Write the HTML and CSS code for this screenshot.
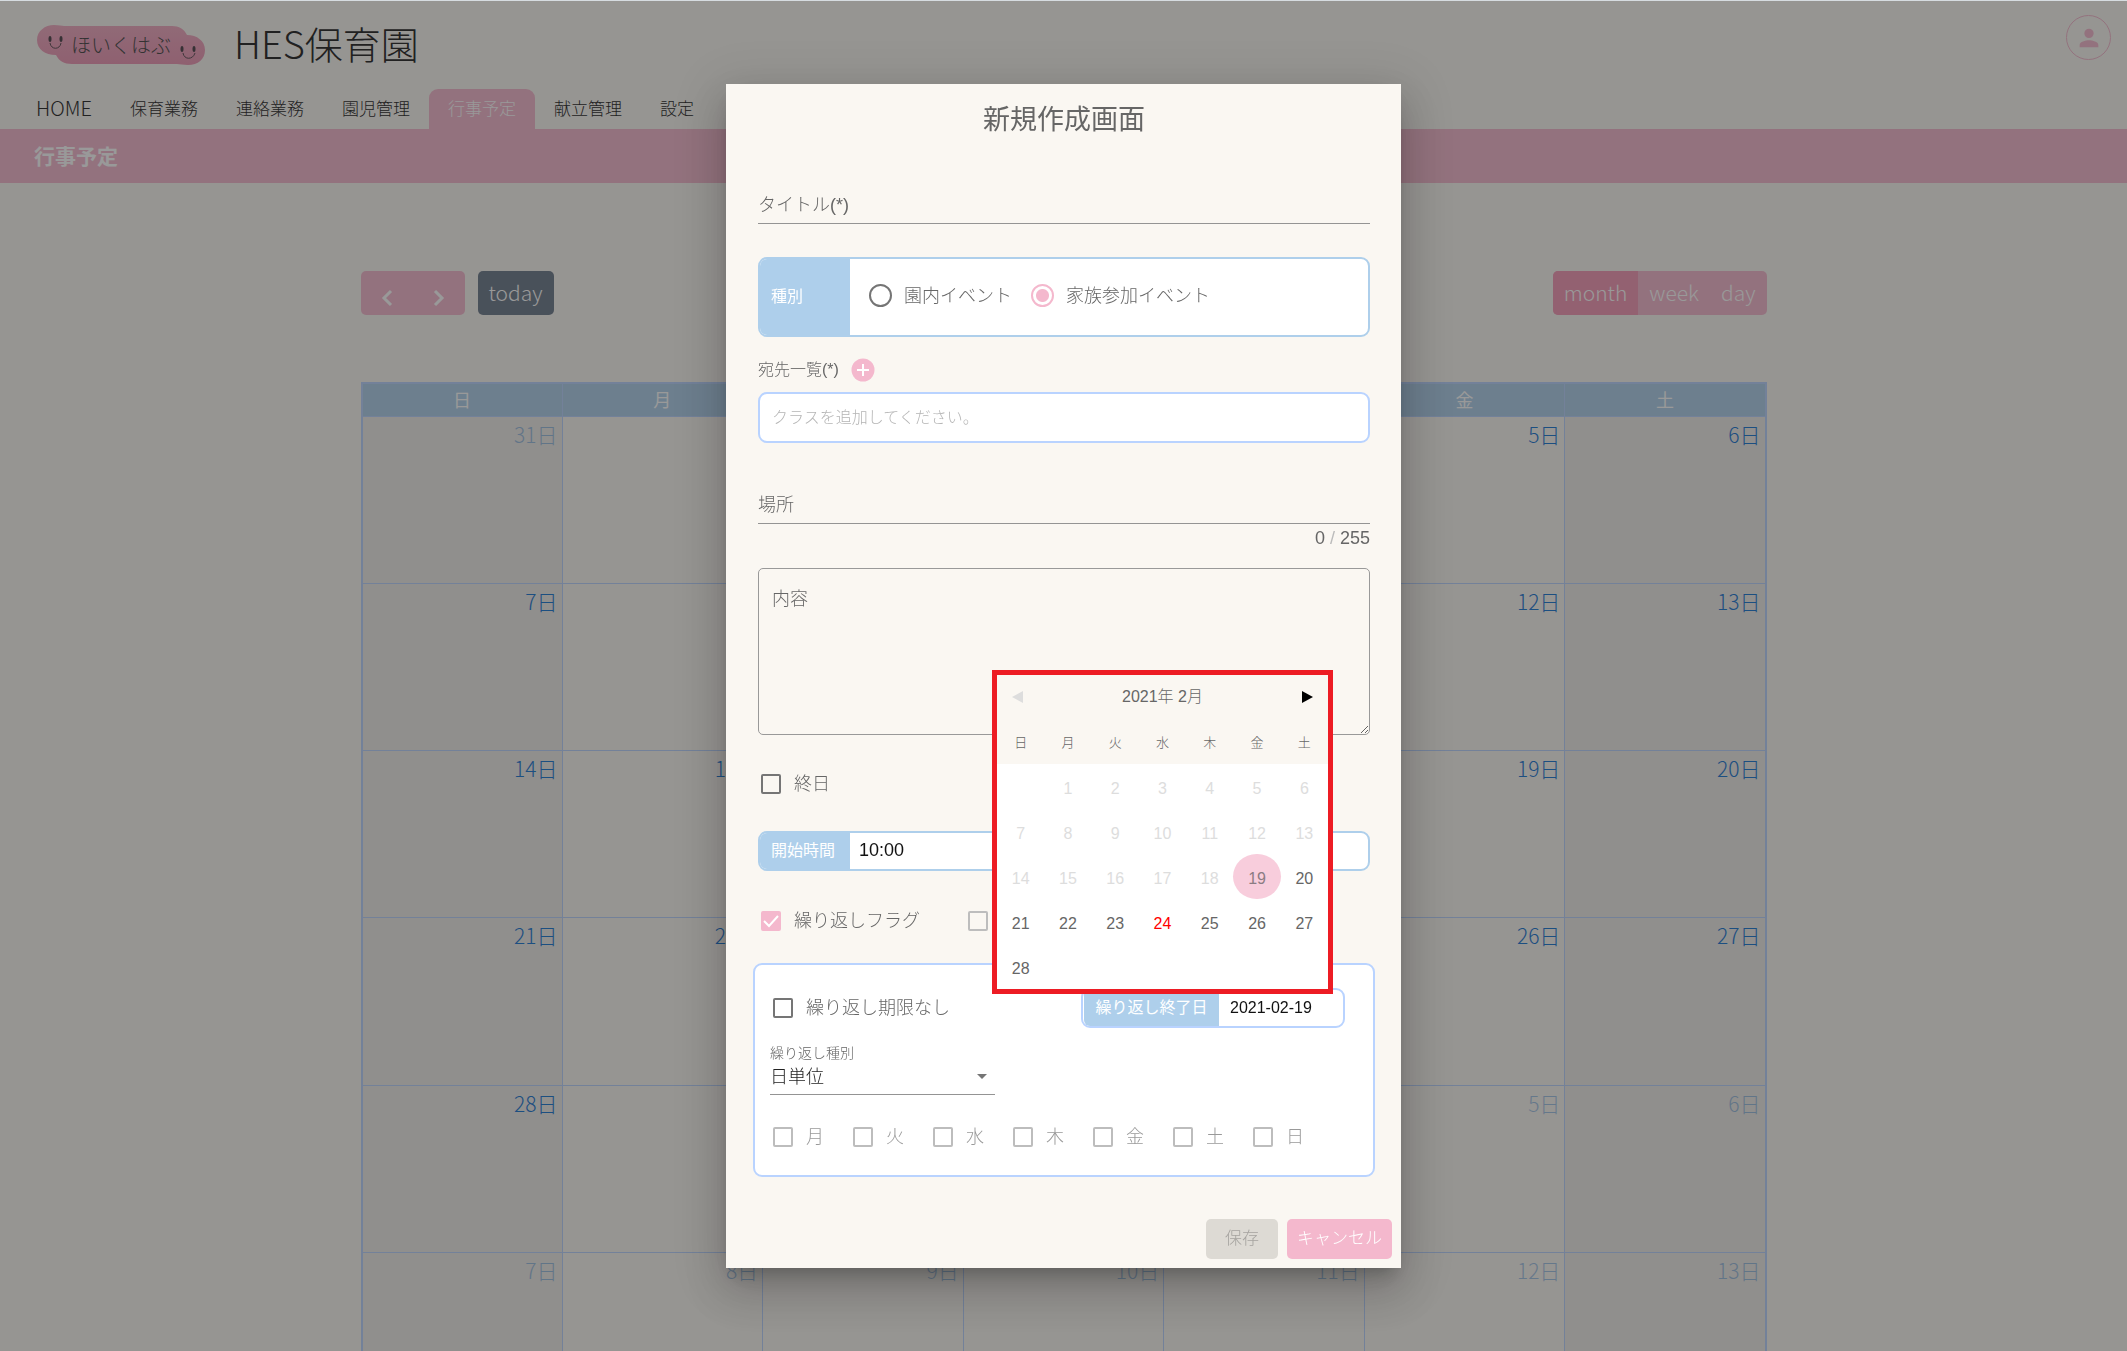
FILE: index.html
```html
<!DOCTYPE html>
<html lang="ja">
<head>
    <meta charset="UTF-8">
    <meta name="viewport" content="width=device-width, initial-scale=1.0">
    <title>行事予定 | HES保育園</title>
    <link rel="stylesheet" href="styles.css">
</head>
<body>
    <header class="header">
        <div class="brand">
            <a href="#" class="logo">
                <svg class="logo-bg" viewBox="0 0 168 40" width="168" height="40" aria-hidden="true">
                    <defs>
                        <linearGradient id="pink" x1="0" y1="0" x2="0" y2="1">
                            <stop offset="0" stop-color="#f0a9c0"/>
                            <stop offset="1" stop-color="#ec96b4"/>
                        </linearGradient>
                    </defs>
                    <path fill="url(#pink)" d="M17 0c5 0 8 1 10 1h108c7 0 12 3 15 9 10 0 18 6 18 15s-7 15-17 15c-5 0-8-1-11-1H35c-8 0-13-3-16-9C8 30 0 24 0 15S8 0 17 0z"/>
                    <g fill="none" stroke="#5a4a52" stroke-width="1">
                        <path d="M13 18c1 7 10 7 11 0M146 28c1 7 10 7 12 0"/>
                    </g>
                    <g fill="#4a4046">
                        <ellipse cx="13" cy="14" rx="1.5" ry="3"/>
                        <ellipse cx="24" cy="14" rx="1.5" ry="3"/>
                        <ellipse cx="145" cy="24" rx="1.5" ry="3"/>
                        <ellipse cx="157" cy="24" rx="1.5" ry="3"/>
                    </g>
                </svg>
                <span class="logo-text">ほいくはぶ</span>
            </a>
            <h1 class="school-name">HES保育園</h1>
            <button class="account" aria-label="アカウント">
                <svg viewBox="0 0 24 24" width="28" height="28"><path fill="#f4b8cd" d="M12 12a4 4 0 1 0 0-8 4 4 0 0 0 0 8zm0 2c-3 0-8 1.300-8 4v2h16v-2c0-2.700-5-4-8-4z"/></svg>
            </button>
        </div>
        <nav class="nav">
            <a href="#" class="home">HOME</a>
            <a href="#">保育業務</a>
            <a href="#">連絡業務</a>
            <a href="#">園児管理</a>
            <a href="#" class="active">行事予定</a>
            <a href="#">献立管理</a>
            <a href="#">設定</a>
        </nav>
    </header>
    <h2 class="page-title">行事予定</h2>

    <main class="calendar">
        <div class="toolbar">
            <div class="button-group">
                <button class="arrow" aria-label="前の月"><svg viewBox="0 0 12 18" width="12" height="18"><path d="M10 2L3 9l7 7"/></svg></button>
                <button class="arrow" aria-label="次の月"><svg viewBox="0 0 12 18" width="12" height="18"><path d="M2 2l7 7-7 7"/></svg></button>
            </div>
            <button class="today">today</button>
            <div class="button-group views">
                <button class="active">month</button>
                <button>week</button>
                <button>day</button>
            </div>
        </div>
        <table class="month">
            <thead>
                <tr><th>日</th><th>月</th><th>火</th><th>水</th><th>木</th><th>金</th><th>土</th></tr>
            </thead>
            <tbody>
                <tr>
                    <td class="other"><a href="#">31日</a></td><td><a href="#">1日</a></td><td><a href="#">2日</a></td><td><a href="#">3日</a></td><td><a href="#">4日</a></td><td><a href="#">5日</a></td><td><a href="#">6日</a></td>
                </tr>
                <tr>
                    <td><a href="#">7日</a></td><td><a href="#">8日</a></td><td><a href="#">9日</a></td><td><a href="#">10日</a></td><td><a href="#">11日</a></td><td><a href="#">12日</a></td><td><a href="#">13日</a></td>
                </tr>
                <tr>
                    <td><a href="#">14日</a></td><td><a href="#">15日</a></td><td><a href="#">16日</a></td><td><a href="#">17日</a></td><td><a href="#">18日</a></td><td><a href="#">19日</a></td><td><a href="#">20日</a></td>
                </tr>
                <tr>
                    <td><a href="#">21日</a></td><td><a href="#">22日</a></td><td><a href="#">23日</a></td><td><a href="#">24日</a></td><td><a href="#">25日</a></td><td><a href="#">26日</a></td><td><a href="#">27日</a></td>
                </tr>
                <tr>
                    <td><a href="#">28日</a></td><td class="other"><a href="#">1日</a></td><td class="other"><a href="#">2日</a></td><td class="other"><a href="#">3日</a></td><td class="other"><a href="#">4日</a></td><td class="other"><a href="#">5日</a></td><td class="other"><a href="#">6日</a></td>
                </tr>
                <tr>
                    <td class="other"><a href="#">7日</a></td><td class="other"><a href="#">8日</a></td><td class="other"><a href="#">9日</a></td><td class="other"><a href="#">10日</a></td><td class="other"><a href="#">11日</a></td><td class="other"><a href="#">12日</a></td><td class="other"><a href="#">13日</a></td>
                </tr>
            </tbody>
        </table>
    </main>

    <!-- 新規作成ダイアログ -->
    <div class="overlay">
        <form class="dialog" role="dialog" aria-labelledby="dialog-title">
            <div class="dialog-body">
                <h2 class="dialog-title" id="dialog-title">新規作成画面</h2>

                <input class="line-input title-input" type="text" placeholder="タイトル(*)" aria-label="タイトル(*)">

                <div class="box kind" role="radiogroup" aria-labelledby="kind-label">
                    <span class="box-label" id="kind-label">種別</span>
                    <label class="option"><input type="radio" name="kind">園内イベント</label>
                    <label class="option"><input type="radio" name="kind" checked>家族参加イベント</label>
                </div>

                <div class="to-row">
                    <label for="to">宛先一覧(*)</label>
                    <button type="button" class="add" aria-label="宛先を追加"><svg viewBox="0 0 24 24" width="24" height="24"><circle cx="12" cy="12" r="11.500" fill="#f4b8cd"/><path d="M12 6v12M6 12h12" stroke="#fff" stroke-width="2"/></svg></button>
                </div>
                <input class="to-input" id="to" type="text" placeholder="クラスを追加してください。">

                <input class="line-input place-input" type="text" placeholder="場所" aria-label="場所">
                <p class="counter">0 <span>/</span> 255</p>

                <textarea class="content" placeholder="内容" aria-label="内容"></textarea>

                <div class="check-row all-day">
                    <label class="check"><input type="checkbox">終日</label>
                </div>

                <div class="box time">
                    <label class="box-label" for="start">開始時間</label>
                    <input class="time-input" id="start" type="text" value="10:00">
                </div>

                <div class="check-row flags">
                    <label class="check"><input type="checkbox" checked>繰り返しフラグ</label>
                    <label class="check"><input type="checkbox" disabled aria-label="予備"></label>
                </div>

                <div class="repeat">
                    <div class="repeat-top">
                        <label class="check"><input type="checkbox">繰り返し期限なし</label>
                        <div class="end-date">
                            <label for="end">繰り返し終了日</label>
                            <input id="end" type="text" value="2021-02-19">

                            <!-- 日付選択 -->
                            <div class="picker">
                                <div class="picker-head">
                                    <button type="button" class="prev" disabled aria-label="前の月"></button>
                                    <span>2021年 2月</span>
                                    <button type="button" class="next" aria-label="次の月"></button>
                                </div>
                                <table class="picker-days">
                                    <thead>
                                        <tr><th>日</th><th>月</th><th>火</th><th>水</th><th>木</th><th>金</th><th>土</th></tr>
                                    </thead>
                                    <tbody>
                                        <tr class="past"><td></td><td>1</td><td>2</td><td>3</td><td>4</td><td>5</td><td>6</td></tr>
                                        <tr class="past"><td>7</td><td>8</td><td>9</td><td>10</td><td>11</td><td>12</td><td>13</td></tr>
                                        <tr class="past"><td>14</td><td>15</td><td>16</td><td>17</td><td>18</td><td class="selected">19</td><td class="open">20</td></tr>
                                        <tr><td>21</td><td>22</td><td>23</td><td class="now">24</td><td>25</td><td>26</td><td>27</td></tr>
                                        <tr><td>28</td><td></td><td></td><td></td><td></td><td></td><td></td></tr>
                                    </tbody>
                                </table>
                            </div>
                        </div>
                    </div>
                    <label class="select-label" for="unit">繰り返し種別</label>
                    <select id="unit" class="unit">
                        <option>日単位</option>
                    </select>
                    <div class="weekdays">
                        <label class="check"><input type="checkbox" disabled>月</label>
                        <label class="check"><input type="checkbox" disabled>火</label>
                        <label class="check"><input type="checkbox" disabled>水</label>
                        <label class="check"><input type="checkbox" disabled>木</label>
                        <label class="check"><input type="checkbox" disabled>金</label>
                        <label class="check"><input type="checkbox" disabled>土</label>
                        <label class="check"><input type="checkbox" disabled>日</label>
                    </div>
                </div>
            </div>
            <div class="dialog-actions">
                <button type="submit" class="save" disabled>保存</button>
                <button type="button" class="cancel">キャンセル</button>
            </div>
        </form>
    </div>
</body>
</html>
```

FILE: styles.css
```css
/* リセット */
* {
    margin: 0;
    padding: 0;
    box-sizing: border-box;
}

body {
    height: 100vh;
    overflow: hidden;
    background: #faf7f2;
    color: #222;
    font-family: "Noto Sans CJK JP", sans-serif;
    font-weight: 300;
    font-size: 18px;
    line-height: 24px;
}

button,
input,
select,
textarea {
    font: inherit;
    color: inherit;
    border: none;
    background: none;
    outline: none;
}

a {
    color: inherit;
    text-decoration: none;
}

/* ヘッダー */
.brand {
    display: flex;
    align-items: center;
    height: 89px;
    padding: 0 16px 0 37px;
}

.logo {
    position: relative;
    display: flex;
    align-items: center;
    justify-content: center;
    width: 168px;
    height: 40px;
}

.logo-bg {
    position: absolute;
    left: 0;
    top: 0;
}

.logo-text {
    position: relative;
    font-size: 20px;
    color: #444;
}

.school-name {
    margin-left: 29px;
    padding-bottom: 4px;
    font-size: 38px;
    font-weight: 300;
    line-height: 48px;
}

.account {
    display: flex;
    align-items: center;
    justify-content: center;
    width: 45px;
    height: 45px;
    margin: 0 0 14px auto;
    border: 1px solid #f4b8cd;
    border-radius: 50%;
}

.nav {
    display: flex;
    padding-left: 17px;
    font-size: 17px;
}

.nav a {
    height: 40px;
    padding: 0 19px;
    line-height: 38px;
}

.nav .home {
    font-size: 20px;
}

.nav .active {
    background: #f4b8cd;
    border-radius: 9px 9px 0 0;
    color: #fff;
}

.page-title {
    height: 54px;
    padding-left: 34px;
    background: #f4b8cd;
    color: #fff;
    font-size: 21px;
    line-height: 52px;
}

/* カレンダー */
.calendar {
    max-width: 1406px;
    margin: 0 auto;
    padding-top: 88px;
}

.toolbar {
    display: flex;
    gap: 13px;
    margin-bottom: 67px;
    color: #fff;
    font-size: 21px;
}

.toolbar button {
    height: 44px;
    padding: 0 11px 3px;
}

.button-group {
    display: flex;
    overflow: hidden;
    background: #f4b8cd;
    border-radius: 5px;
}

.button-group .arrow {
    width: 52px;
    padding: 10px 0 0;
}

.arrow path {
    fill: none;
    stroke: #fff;
    stroke-width: 3;
}

.toolbar .today {
    width: 76px;
    background: #6c7a8b;
    border-radius: 5px;
}

.views {
    margin-left: auto;
}

.views .active {
    background: #f498b5;
}

.month {
    width: 100%;
    height: 1041px;
    border: 2px solid #b9d3ff;
    border-collapse: collapse;
    table-layout: fixed;
}

.month th {
    height: 33px;
    padding-bottom: 2px;
    background: #aecfeb;
    border: 1px solid #b9d3ff;
    color: #fff;
    font-size: 18px;
    font-weight: 400;
    line-height: 24px;
}

.month td {
    padding: 5px 4px;
    border: 1px solid #b9d3ff;
    color: #1976d2;
    font-size: 21px;
    text-align: right;
    vertical-align: top;
}

.month td:first-child,
.month td:last-child {
    background: #eeece9;
}

.month .other a {
    opacity: 0.4;
}

/* ダイアログ */
.overlay {
    position: fixed;
    inset: 0;
    display: flex;
    align-items: center;
    justify-content: center;
    background: rgba(33, 33, 33, 0.46);
    border-top: 1px solid #d6dce0;
}

.dialog {
    width: 675px;
    background: #faf7f2;
    color: #666;
    font-family: "Liberation Sans", "Noto Sans CJK JP", sans-serif;
    box-shadow: 0 11px 15px -7px rgba(0, 0, 0, 0.2), 0 24px 38px 3px rgba(0, 0, 0, 0.14), 0 9px 46px 8px rgba(0, 0, 0, 0.12);
}

.dialog-body {
    padding: 0 31px 0 32px;
}

.dialog-title {
    font-size: 27px;
    font-weight: 400;
    line-height: 72px;
    text-align: center;
}

::placeholder {
    color: #666;
    opacity: 1;
}

.line-input {
    display: block;
    width: 100%;
    height: 36px;
    border-bottom: 1px solid #949494;
}

.title-input {
    margin-top: 32px;
}

.box {
    display: flex;
    background: #fff;
    border: 2px solid #aecfeb;
    border-radius: 9px;
    overflow: hidden;
}

.box-label {
    display: flex;
    align-items: center;
    width: 90px;
    padding-left: 11px;
    background: #aecfeb;
    color: #fff;
    font-size: 16px;
    font-weight: 400;
}

.kind {
    height: 80px;
    margin-top: 33px;
}

.option {
    display: flex;
    align-items: center;
    gap: 12px;
    margin-left: 19px;
    padding-bottom: 3px;
}

/* チェックボックスとラジオ */
input[type="radio"],
input[type="checkbox"] {
    appearance: none;
    flex: none;
    width: 20px;
    height: 20px;
    border: 2px solid #757575;
    border-radius: 2px;
}

input[type="radio"] {
    width: 23px;
    height: 23px;
    border-radius: 50%;
}

input[type="radio"]:checked {
    border-color: #f4b8cd;
    background: radial-gradient(circle, #f4b8cd 6px, #fff 7px);
}

input[type="checkbox"]:checked {
    border-color: #f4b8cd;
    background: #f4b8cd url("data:image/svg+xml,%3Csvg xmlns='http://www.w3.org/2000/svg' viewBox='0 0 16 16'%3E%3Cpath d='M1 8l5 5 9-10' fill='none' stroke='%23fff' stroke-width='2'/%3E%3C/svg%3E");
}

input[type="checkbox"]:disabled {
    border-color: #bdbdbd;
}

.check {
    display: flex;
    align-items: center;
    gap: 13px;
    padding-left: 3px;
}

.to-row {
    display: flex;
    align-items: center;
    gap: 12px;
    height: 24px;
    margin-top: 21px;
    font-size: 16px;
}

.add,
.add svg {
    display: block;
}

.to-input {
    display: block;
    width: 100%;
    height: 51px;
    margin-top: 10px;
    padding: 0 12px;
    background: #fff;
    border: 2px solid #b9d3ff;
    border-radius: 9px;
    font-size: 16px;
}

.to-input::placeholder {
    color: #b5b5b5;
}

.place-input {
    margin-top: 45px;
}

.counter {
    margin-top: 4px;
    font-size: 18px;
    line-height: 20px;
    text-align: right;
}

.counter span {
    color: #bbb;
}

.content {
    display: block;
    width: 100%;
    height: 167px;
    margin-top: 20px;
    padding: 18px 13px;
    border: 1px solid #999;
    border-radius: 5px;
    resize: vertical;
}

.check-row {
    display: flex;
    height: 24px;
}

.all-day {
    margin-top: 37px;
}

.flags {
    gap: 45px;
    margin-top: 38px;
}

.time {
    height: 40px;
    margin-top: 35px;
}

.time-input {
    flex: 1;
    padding-left: 9px;
    padding-bottom: 2px;
    color: #111;
}

/* 繰り返し設定 */
.repeat {
    margin: 30px -5px 0;
    padding: 23px 28px 26px 15px;
    background: #fff;
    border: 2px solid #b9d3ff;
    border-radius: 9px;
}

.repeat-top {
    display: flex;
    justify-content: space-between;
}

.end-date {
    position: relative;
    display: flex;
    width: 264px;
    height: 40px;
    padding-left: 1px;
    border: 2px solid #b9d3ff;
    border-radius: 9px;
    font-size: 16px;
}

.end-date > label {
    flex: none;
    width: 135px;
    background: #aecfeb;
    border-radius: 0 0 0 6px;
    color: #fff;
    font-weight: 400;
    line-height: 36px;
    text-align: center;
}

.end-date input {
    min-width: 0;
    padding-left: 11px;
    color: #111;
}

.select-label {
    display: block;
    margin-top: 15px;
    font-size: 14px;
    line-height: 20px;
}

.unit {
    display: block;
    appearance: none;
    width: 225px;
    height: 31px;
    margin-top: 1px;
    padding-bottom: 5px;
    border-bottom: 1px solid #949494;
    background: url("data:image/svg+xml,%3Csvg xmlns='http://www.w3.org/2000/svg' width='10' height='6'%3E%3Cpath d='M0 0h10L5 5z' fill='%23757575'/%3E%3C/svg%3E") no-repeat right 8px top 10px;
    color: #222;
}

.weekdays {
    display: grid;
    grid-template-columns: repeat(7, 80px);
    margin-top: 30px;
    color: #999;
}

/* 日付選択 */
.picker {
    position: absolute;
    right: 10px;
    bottom: 32px;
    width: 341px;
    background: #fff;
    border: 5px solid #ed1c24;
}

.picker-head {
    display: flex;
    align-items: center;
    justify-content: space-between;
    height: 43px;
    padding: 0 15px;
    background: #faf7f2;
}

.prev,
.next {
    border: 6px solid transparent;
}

.prev {
    border-right: 11px solid #ddd;
    border-left: none;
}

.next {
    border-right: none;
    border-left: 11px solid #000;
}

.picker-days {
    width: 100%;
    border-collapse: collapse;
    table-layout: fixed;
    text-align: center;
}

.picker-days th {
    height: 46px;
    padding-top: 4px;
    background: #faf7f2;
    font-size: 13px;
    font-weight: 300;
}

.picker-days td {
    height: 45px;
    padding-top: 4px;
}

.past {
    color: #ddd;
}

.past .open {
    color: #666;
}

.past .selected {
    background: #f8cddc;
    border-radius: 50%;
    color: #8c7c83;
}

.picker-days .now {
    color: #f00;
}

/* ボタン */
.dialog-actions {
    display: flex;
    justify-content: flex-end;
    gap: 9px;
    padding: 42px 9px 9px;
    font-size: 17px;
}

.dialog-actions button {
    height: 40px;
    border-radius: 5px;
}

.save {
    width: 72px;
    background: #dddad4;
    color: #a5a39f;
}

.cancel {
    width: 105px;
    background: #f4b8cd;
    color: #fff;
}
```
